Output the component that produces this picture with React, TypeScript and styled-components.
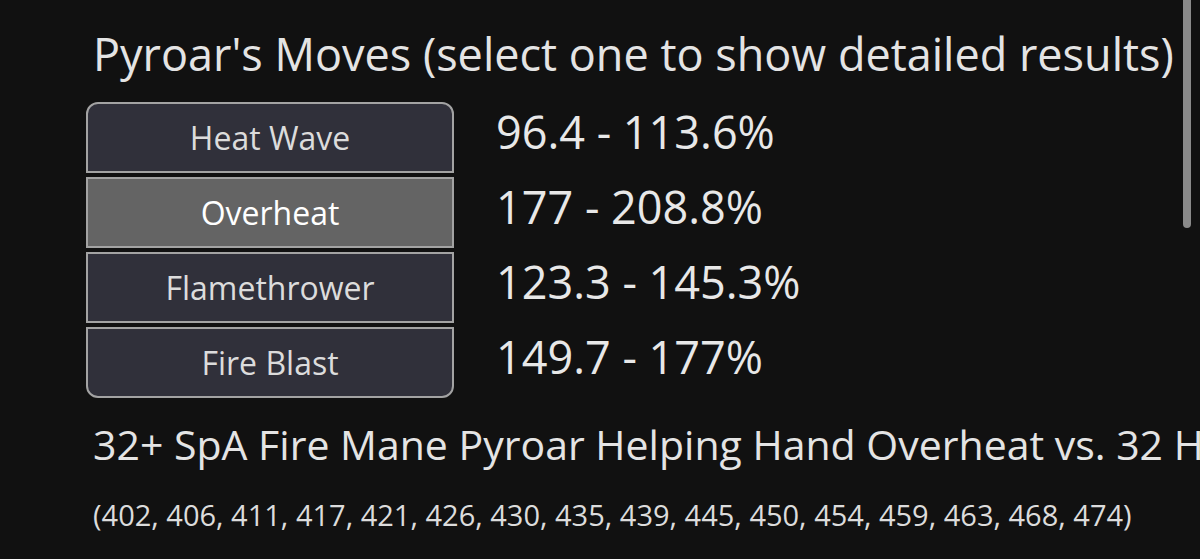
import { Fragment } from "react";
import styled, { createGlobalStyle } from "styled-components";

const GlobalStyle = createGlobalStyle`
  html, body {
    margin: 0;
    padding: 0;
    background: #111111;
    overflow: hidden;
  }
  body {
    font-family: "Open Sans", "Noto Sans", sans-serif;
    color: #e6e6e6;
  }
`;

interface IMove {
  name: string;
  range: string;
}

const moves: IMove[] = [
  { name: "Heat Wave", range: "96.4 - 113.6%" },
  { name: "Overheat", range: "177 - 208.8%" },
  { name: "Flamethrower", range: "123.3 - 145.3%" },
  { name: "Fire Blast", range: "149.7 - 177%" },
];

const Page = styled.div`
  position: relative;
  width: 1200px;
  height: 559px;
  overflow: hidden;
  padding: 26px 0 0 86px;
  box-sizing: border-box;
`;

const Title = styled.h2`
  margin: 0 0 20px 7px;
  font-size: 45px;
  font-weight: 400;
  line-height: 56px;
  white-space: nowrap;
  color: #e4e4e4;
`;

const MoveGrid = styled.div`
  display: grid;
  grid-template-columns: 368px auto;
  column-gap: 42px;
  row-gap: 4px;
`;

const MoveButton = styled.button<{ $selected?: boolean; $pos: "first" | "middle" | "last" }>`
  height: 71px;
  width: 368px;
  margin: 0;
  padding: 0;
  border: 2px solid #a3a3a3;
  border-radius: ${(p) =>
    p.$pos === "first" ? "12px 12px 0 0" : p.$pos === "last" ? "0 0 12px 12px" : "0"};
  background: ${(p) => (p.$selected ? "#646464" : "#30303a")};
  color: ${(p) => (p.$selected ? "#ffffff" : "#dcdcdc")};
  font-family: "Open Sans", "Noto Sans", sans-serif;
  font-size: 32px;
  font-weight: ${(p) => (p.$selected ? 500 : 400)};
  cursor: pointer;
`;

const Range = styled.div`
  align-self: start;
  font-size: 45px;
  line-height: 59px;
  color: #e8e8e8;
  white-space: nowrap;
`;

const Description = styled.div`
  margin: 18px 0 0 7px;
  font-size: 41px;
  line-height: 56px;
  white-space: nowrap;
  color: #e4e4e4;
`;

const Rolls = styled.div`
  margin: 23px 0 0 7px;
  font-size: 29px;
  line-height: 40px;
  white-space: nowrap;
  color: #dcdcdc;
`;

const Scrollbar = styled.div`
  position: absolute;
  top: -8px;
  right: 9px;
  width: 8px;
  height: 236px;
  border-radius: 4px;
  background: #8a8a8a;
`;

export default function App() {
  return (
    <>
      <GlobalStyle />
      <Page>
        <Title>Pyroar's Moves (select one to show detailed results)</Title>
        <MoveGrid>
          {moves.map((m, i) => (
            <Fragment key={m.name}>
              <MoveButton
                $selected={m.name === "Overheat"}
                $pos={i === 0 ? "first" : i === moves.length - 1 ? "last" : "middle"}
              >
                {m.name}
              </MoveButton>
              <Range>{m.range}</Range>
            </Fragment>
          ))}
        </MoveGrid>
        <Description>
          32+ SpA Fire Mane Pyroar Helping Hand Overheat vs. 32 HP / 0 SpD Incineroar
        </Description>
        <Rolls>
          (402, 406, 411, 417, 421, 426, 430, 435, 439, 445, 450, 454, 459, 463, 468, 474)
        </Rolls>
        <Scrollbar />
      </Page>
    </>
  );
}
